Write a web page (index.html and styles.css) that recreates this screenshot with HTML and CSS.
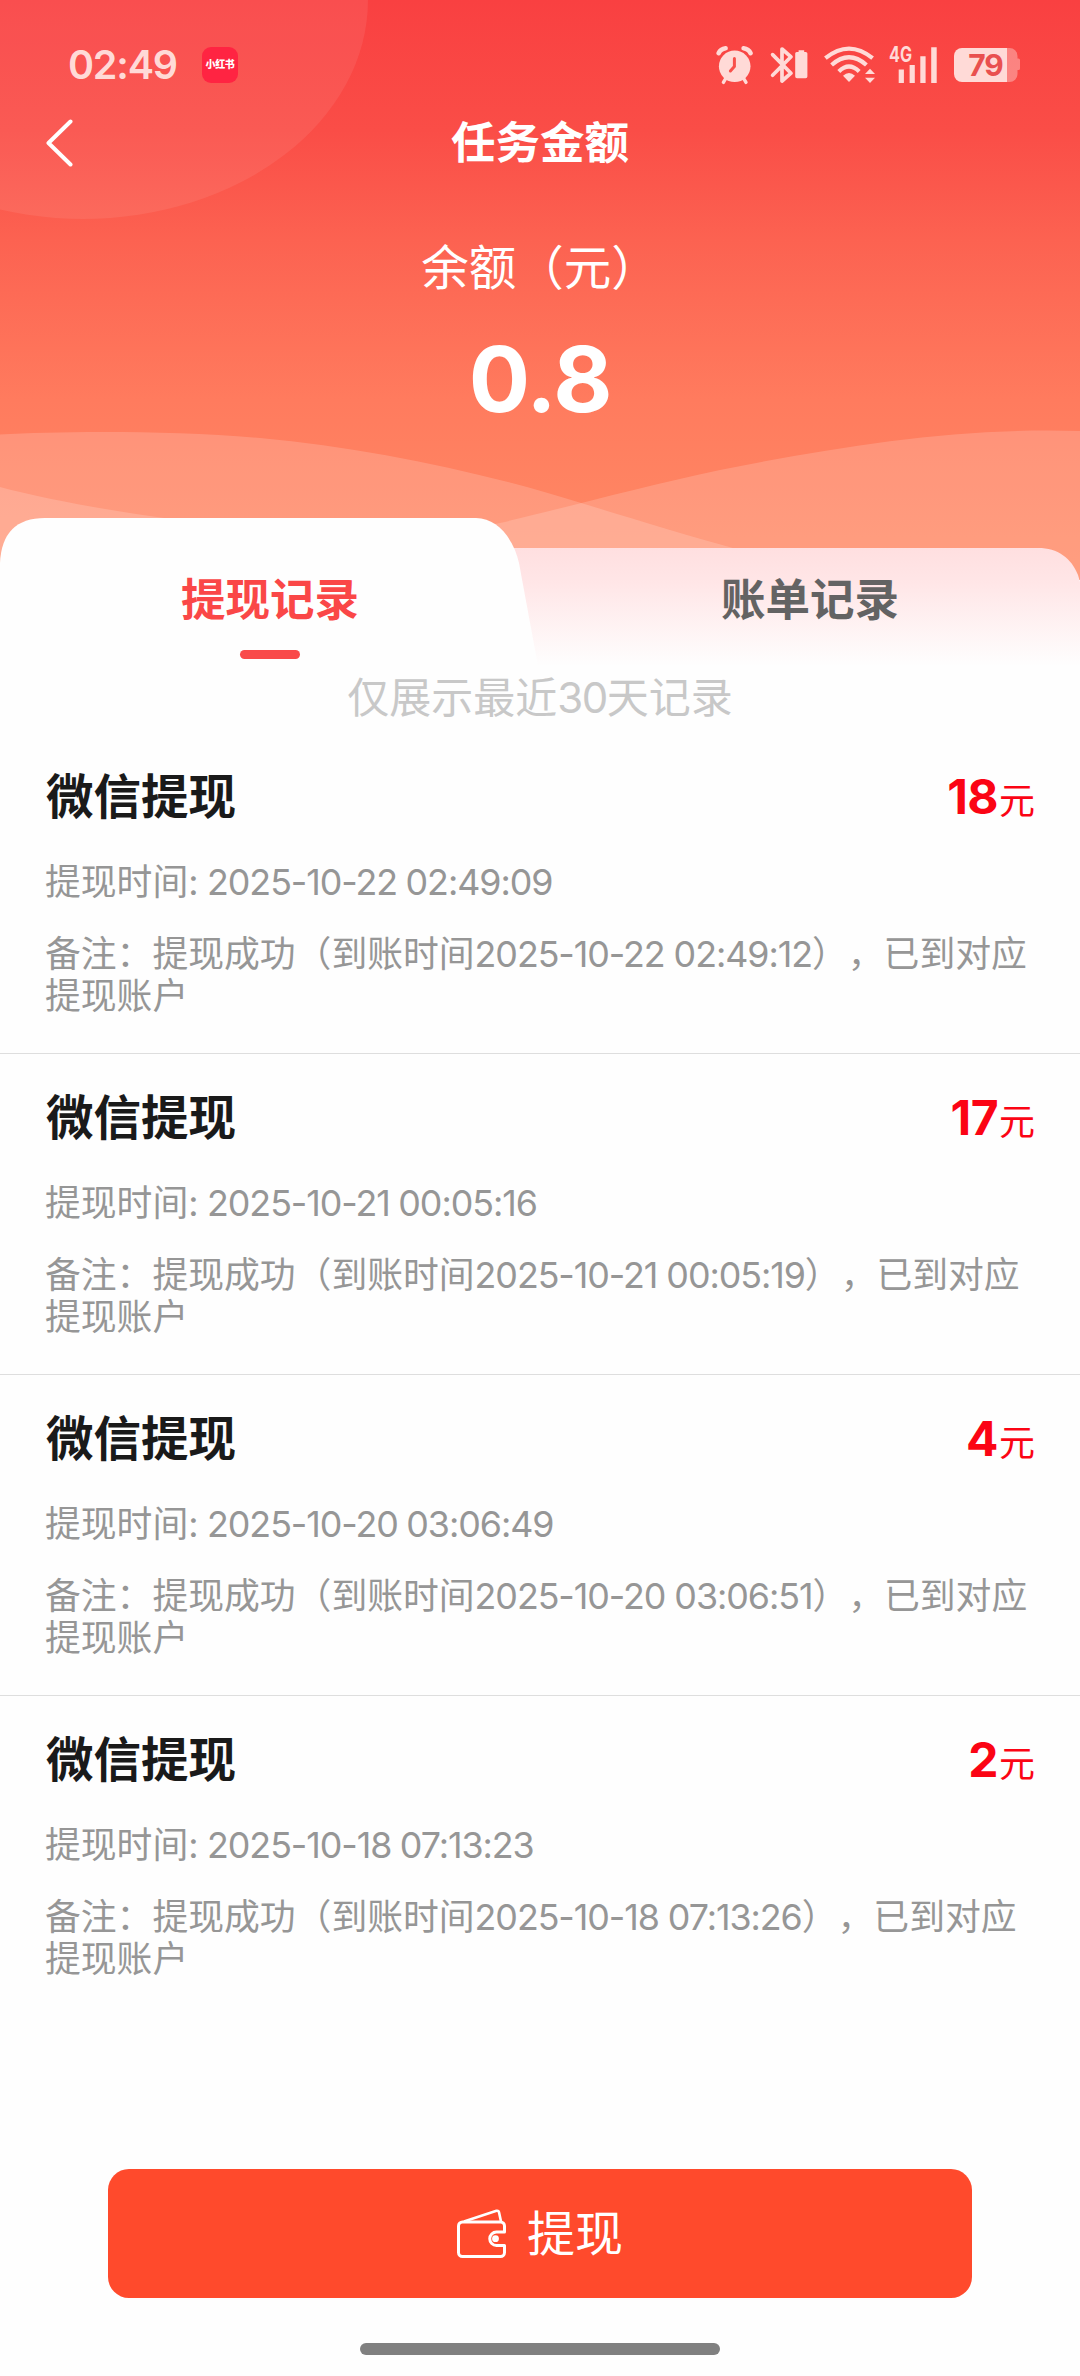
FILE: index.html
```html
<!DOCTYPE html>
<html lang="zh-CN">
<head>
<meta charset="utf-8">
<title>任务金额</title>
<link rel="stylesheet" href="styles.css">
</head>
<body>
<div class="page">
  <header class="hero">
    <svg class="hero-art" width="1080" height="600" viewBox="0 0 1080 600" aria-hidden="true">
      <ellipse cx="83" cy="0" rx="285" ry="219" fill="#fff" fill-opacity=".075"/>
      <path d="M0 434.500C60 431 170 430 260 438C350 446 440 464 527 487C600 508 660 528 740 550V600H0Z" fill="#fff" fill-opacity=".17"/>
      <path d="M1080 431C960 427 840 446 720 470C640 487 560 509 500 523C360 552 110 516 0 487V600H1080Z" fill="#fff" fill-opacity=".17"/>
    </svg>
    <div class="status">
      <div class="status-left">
        <span class="clock">02:49</span>
        <span class="app-badge">小红书</span>
      </div>
      <div class="status-right">
        <svg class="i-alarm" width="37" height="38" viewBox="0 0 37 38">
          <circle cx="18.7" cy="20.3" r="15.8" fill="#ffdad7"/>
          <path d="M2.6 7.2Q4.6 2.8 9.6 2.2M27.6 2.2Q32.6 2.8 34.6 7.2" stroke="#ffdad7" stroke-width="4.6" fill="none" stroke-linecap="round"/>
          <path d="M10 32l-2.6 4.4M27.4 32l2.6 4.4" stroke="#ffdad7" stroke-width="3.4" stroke-linecap="round"/>
          <path d="M18.4 12.6V20.4L14.4 25" stroke="#f9504b" stroke-width="3" fill="none" stroke-linecap="round"/>
        </svg>
        <svg class="i-bt" width="37" height="38" viewBox="0 0 37 38">
          <path d="M1.6 8.6L20 27.2 11 35V3L20 10.8 1.6 29.2" stroke="#ffdad7" stroke-width="3.7" fill="none" stroke-linejoin="round" stroke-linecap="round"/>
          <path d="M27.6 4.2h5.6v1.8h1.6a1.6 1.6 0 0 1 1.6 1.6V30.4a1.8 1.8 0 0 1-1.8 1.8H26a1.8 1.8 0 0 1-1.8-1.8V7.6A1.6 1.6 0 0 1 25.8 6h1.8z" fill="#ffdad7"/>
        </svg>
        <svg class="i-wifi" width="52" height="38" viewBox="0 0 52 38">
          <g stroke="#ffdad7" stroke-width="4.2" fill="none">
            <path d="M1.4 12.2Q25-7 48.6 12.2"/>
            <path d="M7.6 19Q25 3.600 42.4 19"/>
            <path d="M14.800 25.400Q25 15.600 35.200 25.400"/>
          </g>
          <path d="M19 29.800Q25 24.400 31 29.800L25 36z" fill="#ffdad7"/>
          <path d="M46 22.800l5 5.200H41zM46 37l5-5.200H41z" fill="#ffdad7"/>
        </svg>
        <svg class="i-signal" width="49" height="38" viewBox="0 0 49 38">
          <text x="0" y="16.300" class="net" textLength="23" lengthAdjust="spacingAndGlyphs">4G</text>
          <path d="M9.700 23.500h5.200V37H9.700zM20.600 19h5.200v18h-5.200zM31.300 10.200h5.300V37h-5.300zM42.200 1.200h5.500V37h-5.500z" fill="#ffdad7"/>
        </svg>
        <svg class="i-battery" width="67" height="36" viewBox="0 0 67 36">
          <path d="M53 1h2.500a8 8 0 0 1 8 8v2.400h1a1.600 1.600 0 0 1 1.500 1.600v8.400a1.600 1.600 0 0 1-1.500 1.600h-1v4a8 8 0 0 1-8 8H53z" fill="#ffdad7" fill-opacity=".42"/>
          <path d="M53 1H8A8 8 0 0 0 0 9v18a8 8 0 0 0 8 8h45z" fill="#ffdad7"/>
          <text x="31.500" y="29" class="pct" text-anchor="middle">79</text>
        </svg>
      </div>
    </div>
    <nav class="navbar">
      <svg class="back" width="27" height="48" viewBox="0 0 27 48"><path d="M24.500 2.500L2.500 24 24.500 45.500" stroke="#fff" stroke-width="4" fill="none" stroke-linecap="round" stroke-linejoin="round"/></svg>
      <h1 class="nav-title">任务金额</h1>
    </nav>
    <div class="balance-label">余额（元）</div>
    <div class="balance">0.8</div>
  </header>

  <div class="tabs">
    <svg class="tabs-art" width="1080" height="182" viewBox="0 0 1080 182" aria-hidden="true">
      <defs>
        <linearGradient id="tabFade" x1="0" y1="0" x2="0" y2="1">
          <stop offset="0" stop-color="#ffdfe0"/>
          <stop offset=".3" stop-color="#ffe6e7"/>
          <stop offset="1" stop-color="#fefefe"/>
        </linearGradient>
      </defs>
      <path d="M0 62H1080V182H0z" fill="#fefefe"/>
      <path d="M500 30H1038C1058 30 1071 40 1078 57L1080 64V148H500z" fill="url(#tabFade)"/>
      <path d="M0 182V45Q2 0 45 0H476C498 0 514 22 519 45L538 148V182z" fill="#fefefe"/>
    </svg>
    <div class="tab tab-active"><span>提现记录</span></div>
    <div class="tab"><span>账单记录</span></div>
  </div>
  <p class="hint">仅展示最近<span class="hint-num">30</span>天记录</p>

  <main class="list">
    <article class="item">
      <div class="item-head"><h2>微信提现</h2><div class="amount"><b>18</b>元</div></div>
      <p class="time">提现时间:<span class="d"> 2025-10-22 02:49:09</span></p>
      <p class="note">备注：提现成功（到账时间<span class="d">2025-10-22 02:49:12</span>），已到对应<br>提现账户</p>
    </article>
    <article class="item">
      <div class="item-head"><h2>微信提现</h2><div class="amount"><b>17</b>元</div></div>
      <p class="time">提现时间:<span class="d"> 2025-10-21 00:05:16</span></p>
      <p class="note">备注：提现成功（到账时间<span class="d">2025-10-21 00:05:19</span>），已到对应<br>提现账户</p>
    </article>
    <article class="item">
      <div class="item-head"><h2>微信提现</h2><div class="amount"><b>4</b>元</div></div>
      <p class="time">提现时间:<span class="d"> 2025-10-20 03:06:49</span></p>
      <p class="note">备注：提现成功（到账时间<span class="d">2025-10-20 03:06:51</span>），已到对应<br>提现账户</p>
    </article>
    <article class="item">
      <div class="item-head"><h2>微信提现</h2><div class="amount"><b>2</b>元</div></div>
      <p class="time">提现时间:<span class="d"> 2025-10-18 07:13:23</span></p>
      <p class="note">备注：提现成功（到账时间<span class="d">2025-10-18 07:13:26</span>），已到对应<br>提现账户</p>
    </article>
  </main>

  <footer class="footer">
    <button class="withdraw" type="button">
      <svg width="50" height="50" viewBox="0 0 50 50" fill="none" stroke="#fff" stroke-width="3" stroke-linejoin="round">
        <path d="M47.500 23V17a4 4 0 0 0-4-4H5.500a4 4 0 0 0-4 4V43.500a4 4 0 0 0 4 4H43.500a4 4 0 0 0 4-4V36.500H39.500a6.750 6.750 0 0 1 0-13.500z"/>
        <path d="M7 12.500L39.500 1.800Q41.500 1.400 42 3.200L44 12.500" stroke-width="2.600"/>
        <circle cx="38.500" cy="29.700" r="3.400" fill="#fff" stroke="none"/>
      </svg>
      <span>提现</span>
    </button>
    <div class="home-bar"></div>
  </footer>
</div>
</body>
</html>
```
FILE: styles.css
```css
* { box-sizing: border-box; }

body {
  margin: 0;
  background: #fefefe;
  font-family: Inter, "Noto Sans CJK SC", sans-serif;
  text-spacing-trim: space-all;
}

h1, h2, p { margin: 0; }

.page {
  width: 1080px;
  height: 2376px;
  display: flex;
  flex-direction: column;
  overflow: hidden;
}

.hero {
  position: relative;
  height: 518px;
  flex: none;
  display: flex;
  flex-direction: column;
  align-items: center;
  color: #fff;
}

.hero-art {
  position: absolute;
  left: 0;
  top: 0;
  background: linear-gradient(#f94041 0, #fa4d47 130px, #fc6251 240px, #ff7b5e 400px, #ff8a65 560px);
}

.status {
  position: relative;
  width: 100%;
  height: 72px;
  margin-top: 29px;
  padding: 0 59px 0 68px;
  display: flex;
  justify-content: space-between;
  align-items: center;
}

.status-left, .status-right { display: flex; align-items: center; }
.status-right svg { overflow: visible; }

.clock {
  width: 134px;
  font-size: 39.500px;
  font-weight: 600;
  line-height: 70px;
  letter-spacing: -1.200px;
  color: #ffdad7;
}

.app-badge {
  width: 36px;
  height: 36px;
  border-radius: 9px;
  background: #ff2442;
  color: #fff;
  font-size: 10px;
  font-weight: 900;
  line-height: 35px;
  text-align: center;
  white-space: nowrap;
  letter-spacing: -.3px;
}

.i-alarm { margin-right: 18px; }
.i-bt { margin-right: 16px; }
.i-wifi { margin-right: 13px; }
.i-signal { margin-right: 16px; }
.net { font-size: 21px; font-weight: 700; fill: #ffdad7; }
.pct { font-size: 30px; font-weight: 700; fill: #e9504f; letter-spacing: -1px; }

.navbar {
  position: relative;
  width: 100%;
  height: 84px;
  display: grid;
  grid-template-columns: 100px 1fr 100px;
  align-items: center;
}

.back { margin-left: 46px; }

.nav-title {
  font-size: 44.500px;
  font-weight: 700;
  line-height: 64px;
  text-align: center;
}

.balance-label {
  position: relative;
  margin-top: 47px;
  font-size: 47.500px;
  line-height: 72px;
}

.balance {
  position: relative;
  margin-top: 25px;
  font-size: 91px;
  font-weight: 700;
  line-height: 100px;
  letter-spacing: -1px;
}

.tabs {
  position: relative;
  height: 142px;
  flex: none;
  display: grid;
  grid-template-columns: 1fr 1fr;
}

.tabs-art { position: absolute; left: 0; top: 0; }

.tab {
  position: relative;
  padding-top: 51px;
  display: flex;
  flex-direction: column;
  align-items: center;
  font-size: 44.500px;
  font-weight: 700;
  line-height: 62px;
  color: #636363;
}

.tab-active { color: #fa4747; }

.tab-active::after {
  content: "";
  width: 60px;
  height: 9px;
  margin-top: 19px;
  border-radius: 4.500px;
  background: #f94a4a;
}

.hint {
  position: relative;
  height: 73px;
  padding-top: 8px;
  font-size: 42px;
  line-height: 60px;
  text-align: center;
  color: #c8c8c8;
}

.hint-num { letter-spacing: -1.500px; }

.list { flex: 1; }

.item {
  height: 321px;
  padding: 34px 45px 0;
  border-bottom: 1px solid #dedede;
}

.item:last-child { border-bottom: 0; }

.item-head {
  display: flex;
  justify-content: space-between;
  align-items: center;
  height: 60px;
}

.item h2 {
  padding-left: 1px;
  font-size: 47.500px;
  font-weight: 700;
  line-height: 60px;
  color: #1a1a1a;
}

.amount {
  padding-top: 4px;
  font-size: 36px;
  line-height: 60px;
  color: #fb0414;
}

.amount b {
  margin-right: 1px;
  font-size: 48px;
  letter-spacing: -.600px;
}

.time, .note {
  font-size: 35.800px;
  line-height: 42px;
  white-space: nowrap;
  color: #969696;
}

.time { margin-top: 34px; }
.note { margin-top: 30px; }
.d { letter-spacing: -1.050px; }
.time .d { word-spacing: -.500px; }

.footer {
  display: flex;
  flex-direction: column;
  align-items: center;
  height: 207px;
  flex: none;
}

.withdraw {
  width: 864px;
  height: 129px;
  padding: 0;
  border: 0;
  border-radius: 21px;
  background: #ff4a2c;
  color: #fff;
  font: 400 48px/72px Inter, "Noto Sans CJK SC", sans-serif;
  display: flex;
  justify-content: center;
  align-items: center;
  gap: 20px;
}

.home-bar {
  width: 360px;
  height: 12px;
  margin-top: 45px;
  border-radius: 6px;
  background: #808080;
}
```
